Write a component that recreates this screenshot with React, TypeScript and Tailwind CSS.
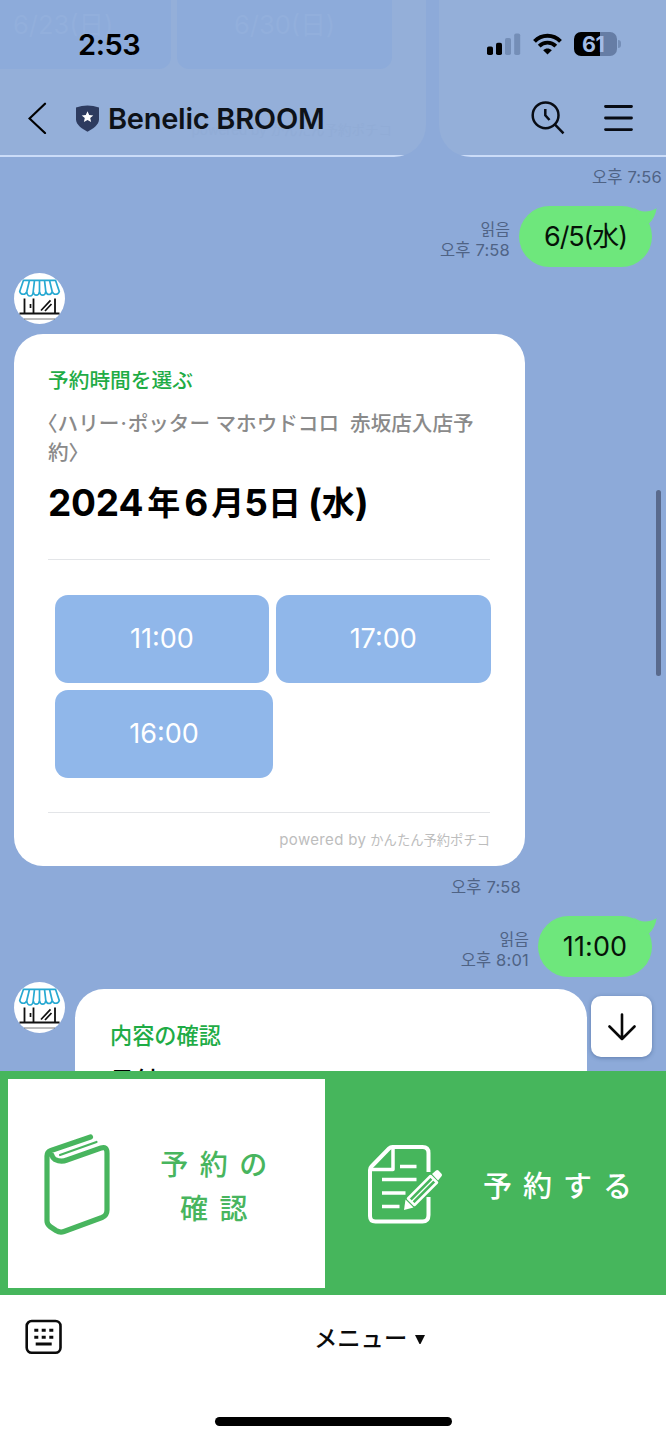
import React from "react";

const latin = "font-[Inter,'Noto_Sans_CJK_JP',sans-serif]";
const korean = "font-[Inter,'Noto_Sans_CJK_KR',sans-serif]";

function Avatar() {
  return (
    <svg className="block size-[51px] shrink-0" viewBox="0 0 51 51" fill="none">
      <circle cx="25.5" cy="25.5" r="25.5" fill="#fff" />
      <path
        d="M9.500 7.300H41.500L45.300 18.500A3.800 4.300 0 0 1 38.200 18.500A3.400 4.500 0 0 1 31.800 18.500A3.200 4.500 0 0 1 25.500 18.500A3.200 4.500 0 0 1 19.200 18.500A3.200 4.500 0 0 1 12.800 18.500A3.800 4.300 0 0 1 5.700 18.500Z M15.500 7.300L12.800 18.500 M20.500 7.300L19.200 18.500 M25.500 7.300V18.500 M30.500 7.300L31.800 18.500 M35.500 7.300L38.200 18.500"
        stroke="#27a9d2"
        strokeWidth="1.700"
        strokeLinejoin="round"
      />
      <path d="M5.500 40.500H45.500 M10.500 25.500V40.500 M19.500 25.500V40.500 M41 25.500V40.500" stroke="#111" strokeWidth="1.800" />
      <path d="M16.500 31V35 M27 37.500L36.500 27.300 M31 38L37.500 31" stroke="#111" strokeWidth="1.700" />
      <path d="M10 46H41" stroke="#777" strokeWidth="1" />
    </svg>
  );
}

function Ghosts() {
  return (
    <div className="pointer-events-none absolute inset-0 overflow-hidden">
      <div className="absolute left-[-90px] top-[-40px] flex h-[197px] w-[516px] items-end overflow-hidden rounded-[32px] bg-[#94afd9]">
        <div className="h-[2px] w-full bg-[#cbdcf8]" />
      </div>
      <div className="absolute left-[439px] top-[-40px] flex h-[197px] w-[516px] items-end overflow-hidden rounded-[32px] bg-[#94afd9]">
        <div className="h-[2px] w-full bg-[#cbdcf8]" />
      </div>
      <div className="absolute left-[-44px] top-[-20px] h-[89px] w-[215px] rounded-[12px] bg-[#8dabda]" />
      <div className="absolute left-[177px] top-[-20px] h-[89px] w-[215px] rounded-[12px] bg-[#8dabda]" />
      <span className={`absolute left-[13px] top-[6px] whitespace-nowrap text-[25.500px] text-[#92afdc] ${latin}`}>6/23(日)</span>
      <span className={`absolute left-[234px] top-[6px] whitespace-nowrap text-[25.500px] text-[#92afdc] ${latin}`}>6/30(日)</span>
      <span className={`absolute right-[274px] top-[120px] whitespace-nowrap text-[13.500px] text-[#91acd6] ${latin}`}>powered by かんたん予約ポチコ</span>
    </div>
  );
}

function Header() {
  return (
    <header className="relative h-[157px] shrink-0 overflow-hidden">
      <Ghosts />
      <div className="relative flex h-[88px] items-center justify-between pl-[78px] pr-[45px]">
        <span className={`text-[29px] font-semibold leading-none tracking-[-0.4px] text-black ${latin}`}>2:53</span>
        <div className="flex items-center">
          <svg className="h-[24px] w-[34px]" viewBox="0 0 34 24">
            <rect x="0" y="14.500" width="6" height="8.500" rx="1.800" fill="#000" />
            <rect x="9" y="10.800" width="6" height="12.200" rx="1.800" fill="#000" />
            <rect x="18" y="6" width="6" height="17" rx="1.800" fill="#748eb7" />
            <rect x="27.200" y="1.500" width="6" height="21.500" rx="1.800" fill="#748eb7" />
          </svg>
          <svg className="ml-[12px] h-[22px] w-[29px]" viewBox="0 0 29 22" fill="none" stroke="#000">
            <path d="M1.500 8.300C8.800 1 20.200 1 27.500 8.300" strokeWidth="4" />
            <path d="M6.200 13.100C10.900 8.500 18.100 8.500 22.800 13.100" strokeWidth="3.900" />
            <path d="M14.500 21.500L10.200 17.200C12.600 14.900 16.400 14.900 18.800 17.200Z" fill="#000" stroke="none" />
          </svg>
          <div className="ml-[12px] flex items-center">
            <div className="flex h-[24px] w-[43px] items-center rounded-[7px] bg-[linear-gradient(90deg,#000_26.5px,#667da5_26.5px)] pl-[8px]">
              <span className={`mt-px text-[21.500px] font-bold leading-none tracking-[-0.500px] text-[#a3bce6] ${latin}`}>61</span>
            </div>
            <div className="ml-px h-[8px] w-[3px] rounded-r-full bg-[#748eb7]" />
          </div>
        </div>
      </div>
      <div className="relative flex h-[60px] items-center pl-[28px] pr-[33px]">
        <svg className="h-[32px] w-[19px]" viewBox="0 0 19 32" fill="none" stroke="#000" strokeWidth="2.200">
          <path d="M17 1.700L1.500 16.500L17 31" strokeLinecap="round" />
        </svg>
        <svg className="ml-[29px] h-[27px] w-[23px]" viewBox="0 0 23 27">
          <path d="M0 2.500Q11.500-1.700 23 2.500V14.500C23 19.500 17 24 11.500 26.700C6 24 0 19.500 0 14.500Z" fill="#2d3b5f" />
          <path d="M11.500 6.200L13.200 10L17.300 10.400L14.200 13.100L15.100 17.100L11.500 15L7.900 17.100L8.800 13.100L5.700 10.400L9.800 10Z" fill="#fff" />
        </svg>
        <h1 className={`ml-[9px] mt-px text-[29px] font-semibold leading-none tracking-[-0.270px] text-[#0e1218] ${latin}`}>Benelic BROOM</h1>
        <svg className="ml-auto h-[34px] w-[34px]" viewBox="0 0 34 34" fill="none" stroke="#080c14" strokeWidth="2.500">
          <circle cx="14.600" cy="14.300" r="12.900" />
          <path d="M23.800 23.300L32.500 32.300" />
          <path d="M14.300 8V14.300L18.500 19" />
        </svg>
        <svg className="ml-[39px] h-[28px] w-[29px]" viewBox="0 0 29 28" stroke="#080c14" strokeWidth="2.800" strokeLinecap="round">
          <path d="M1.500 2.500H27.500 M1.500 14H27.500 M1.500 25.600H27.500" />
        </svg>
      </div>
    </header>
  );
}

function Time({ children }: { children: string }) {
  const [prefix, clock] = children.split(" ");
  return (
    <span className={`inline-flex items-baseline gap-[5px] text-[16.500px] leading-[21px] text-[#4f6385] ${korean}`}>
      <span>{prefix}</span>
      <span className="text-[16.500px] tracking-[0.200px]">{clock}</span>
    </span>
  );
}

function Bubble({ text, time, width, ls }: { text: string; time: string; width: string; ls: string }) {
  return (
    <div className="flex h-[61px] shrink-0 justify-end pr-[14px]">
      <div className={`mr-[9px] mt-[13px] flex flex-col items-end text-[16px] leading-[21px] text-[#4f6385] ${korean}`}>
        <span className="h-[21px]">읽음</span>
        <Time>{time}</Time>
      </div>
      <div className={`relative flex items-center justify-center rounded-[31px] bg-[#6ee77c] pt-[2px] text-[27px] text-[#061208] ${width} ${ls} ${latin}`}>
        {text}
        <svg className="absolute right-[-6px] top-0 h-[22px] w-[26px]" viewBox="0 0 26 22">
          <path d="M2 1.500C8 6.500 16 7 24.700 2.300C23.500 9 21 14 17 17.500L6 12Z" fill="#6ee77c" />
        </svg>
      </div>
    </div>
  );
}

function Slot({ label, width }: { label: string; width: string }) {
  return (
    <button className={`flex h-[88px] items-center justify-center rounded-[13px] bg-[#90b7ea] pt-px text-[27px] text-white ${width} ${latin}`}>
      {label}
    </button>
  );
}

function BookingCard() {
  return (
    <section className="ml-[14px] mt-[10px] h-[532px] w-[511px] shrink-0 rounded-[29px] bg-white px-[34px] pt-[34px]">
      <h2 className={`h-[26px] text-[20.700px] font-medium leading-[26px] text-[#1fac46] ${latin}`}>予約時間を選ぶ</h2>
      <p className={`mt-[16px] w-[450px] whitespace-nowrap text-[20.600px] font-medium leading-[28.500px] text-[#8a8a8a] ${latin}`}>
        <span className="-ml-[11px]">〈</span>ハリー<span className="mx-px">·</span>ポッター マホウドコロ&nbsp; 赤坂店入店予
        <br />約〉
      </p>
      <p className={`mt-[14px] flex h-[44px] items-center whitespace-nowrap text-[37px] font-bold leading-[44px] text-black ${latin}`}>
        <span className="tracking-[-0.200px]">2024</span>
        <span className="ml-[4px] text-[33px]">年</span>
        <span className="ml-[4px]">6</span>
        <span className="ml-[3px] text-[33px]">月</span>
        <span>5</span>
        <span className="text-[33px]">日</span>
        <span className="ml-[7px]">(</span>
        <span className="text-[33px]">水</span>
        <span>)</span>
      </p>
      <div className="mt-[34px] h-px w-[442px] bg-[#e3e5e8]" />
      <div className="ml-[7px] mt-[35px] flex w-[436px] flex-wrap gap-[7px]">
        <Slot label="11:00" width="w-[214px]" />
        <Slot label="17:00" width="w-[214.500px]" />
        <Slot label="16:00" width="w-[218px]" />
      </div>
      <div className="mt-[34px] h-px w-[442px] bg-[#e3e5e8]" />
      <p className={`mt-[16px] flex w-[442px] items-baseline justify-end whitespace-nowrap leading-[22px] text-[#bdbdbd] ${latin}`}>
        <span className="text-[15px] tracking-[0.350px]">powered by</span>
        <span className="ml-[4px] text-[13.300px]">かんたん予約ポチコ</span>
      </p>
    </section>
  );
}

function Chat() {
  return (
    <main className="relative flex h-[914px] shrink-0 flex-col overflow-hidden bg-[#8daad9]">
      <div className="flex h-[49px] shrink-0 justify-end pr-[4px] pt-[10px]">
        <Time>오후 7:56</Time>
      </div>
      <Bubble text="6/5(水)" time="오후 7:58" width="w-[133px]" ls="tracking-[-1.1px]" />
      <div className="ml-[14px] mt-[6px] h-[51px] shrink-0">
        <Avatar />
      </div>
      <BookingCard />
      <div className="flex h-[50px] w-[521px] shrink-0 justify-end pt-[11px]">
        <Time>오후 7:58</Time>
      </div>
      <Bubble text="11:00" time="오후 8:01" width="w-[114px]" ls="tracking-[0.1px]" />
      <div className="flex shrink-0 pl-[14px] pt-[5px]">
        <Avatar />
        <section className="ml-[10px] mt-[7px] h-[120px] w-[512px] shrink-0 rounded-t-[29px] bg-white px-[35px] pt-[33px]">
          <h2 className={`text-[22.200px] font-medium leading-[28px] text-[#1fac46] ${latin}`}>内容の確認</h2>
          <p className={`mt-[13px] text-[24px] font-medium leading-[36px] text-black ${latin}`}>日付</p>
        </section>
        <button className="ml-[4px] mt-[14px] flex size-[61px] shrink-0 items-center justify-center rounded-[10px] bg-white shadow-[0_1px_4px_rgba(40,70,120,0.45)]">
          <svg className="size-[28px]" viewBox="0 0 28 28" fill="none" stroke="#080808" strokeWidth="2.600" strokeLinecap="round" strokeLinejoin="round">
            <path d="M14 1.500V26 M1.500 13.500L14 26L26.500 13.500" />
          </svg>
        </button>
      </div>
      <div className="absolute right-[5px] top-[333px] h-[186px] w-[5px] rounded-full bg-[#596a8d]" />
    </main>
  );
}

function RichMenu() {
  return (
    <nav className="flex h-[224px] shrink-0 bg-[#46b65c] pb-[7px] pl-[8px] pt-[8px]">
      <div className="flex h-[209px] w-[317px] bg-white">
        <svg className="ml-[35px] mt-[54px] h-[102px] w-[68px]" viewBox="0 0 68 102" fill="none" stroke="#48b55e" strokeLinecap="round" strokeLinejoin="round">
          <path d="M47.500 4L8 17.500Q4 19 4 23V88Q4 91 7 93.500L13 97.500Q17 100 21 98.500L59 84.500Q64 82.500 64 77V20Q64 13 58 15L24 27Q18 29.500 12 26.500Q9.500 25 9 22.500" strokeWidth="5.200" />
          <path d="M17 22L53.500 9" strokeWidth="2.200" />
        </svg>
        <div className={`ml-[46px] mt-[64px] w-[125px] text-center text-[28px] font-medium leading-[44px] tracking-[11.500px] text-[#48b55e] ${latin}`}>
          <div>予約の</div>
          <div>確認</div>
        </div>
      </div>
      <div className="flex flex-1">
        <svg className="ml-[43px] mt-[65px] h-[80px] w-[76px]" viewBox="0 0 76 80" fill="none" stroke="#fff" strokeLinejoin="round">
          <path d="M61 29V10Q61 4 55 4H25Q23 4 21.500 5.500L4 23.500Q2.500 25 2.500 27V73Q2.500 78.500 8 78.500H55Q61 78.500 61 72V54" strokeWidth="4" transform="translate(-0.500 -1)" />
          <path d="M25 4.500V25.500H4" strokeWidth="3.500" />
          <path d="M32 22.500H48.500 M14 35.500H48.500 M14 49H37.500 M14 62.500H31.500" strokeWidth="3.400" />
          <path d="M43 57.500L40 54.500L62.500 32L69 38.500L46.500 61Z" strokeWidth="2.500" />
          <path d="M43.500 57.500L66 35" strokeWidth="1.300" />
          <path d="M37.500 55.500L45.500 63.500L36 66Z" fill="#fff" stroke="none" />
          <path d="M64 30L68 26.500Q69.300 25.500 70.500 26.500L73.500 29.700Q74.700 31 73.500 32.300L70 36.500Z" fill="#fff" stroke="none" />
        </svg>
        <div className={`ml-[39px] mt-[86px] whitespace-nowrap text-[29px] font-medium leading-[44px] tracking-[11px] text-white ${latin}`}>予約する</div>
      </div>
    </nav>
  );
}

function BottomBar() {
  return (
    <footer className="flex h-[145px] shrink-0 flex-col items-center bg-white">
      <div className="flex h-[84px] w-full items-center pl-[25px]">
        <svg className="h-[36px] w-[38px]" viewBox="0 0 38 36">
          <rect x="1.700" y="2" width="33.800" height="31.800" rx="5" fill="none" stroke="#0b0b0b" strokeWidth="2.600" />
          <path d="M9.300 11.200H13.300 M16.700 11.200H20.700 M24.300 11.200H28.300 M9.300 18.200H13.300 M16.700 18.200H20.700 M24.300 18.200H28.300 M10.700 25H26.700" stroke="#0b0b0b" strokeWidth="2.900" />
        </svg>
        <div className={`ml-[251px] mt-[3px] flex items-center whitespace-nowrap text-[23.300px] font-medium leading-[32px] text-[#0b0b0b] ${latin}`}>
          <span>メニュー</span>
          <svg className="ml-[8px] mt-[2px] h-[9px] w-[10px]" viewBox="0 0 10 9">
            <path d="M0 0H10L5.500 9H4.500Z" fill="#0b0b0b" />
          </svg>
        </div>
      </div>
      <div className="mt-[38px] h-[9px] w-[237px] rounded-full bg-black" />
    </footer>
  );
}

export default function App() {
  return (
    <div className="flex h-[1440px] w-[666px] flex-col overflow-hidden bg-[#8daad9]">
      <Header />
      <Chat />
      <RichMenu />
      <BottomBar />
    </div>
  );
}
